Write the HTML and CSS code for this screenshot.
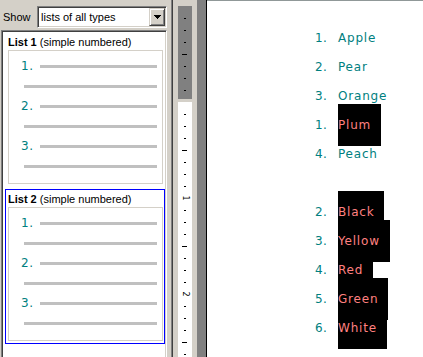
FILE: index.html
```html
<!DOCTYPE html>
<html>
<head>
<meta charset="utf-8">
<title>Lists</title>
<link rel="stylesheet" href="styles.css">
</head>
<body>
<div class="app">
  <div class="left">
    <div class="topbar">
      <span class="show-label">Show</span>
      <div class="combo">
        <span class="combo-text">lists of all types</span>
        <span class="combo-btn"><svg class="tri" width="7" height="4" viewBox="0 0 7 4"><polygon points="0,0 7,0 3.5,4" fill="#000"/></svg></span>
      </div>
    </div>
    <div class="listbox">
      <div class="item">
        <div class="item-title"><b>List 1</b> (simple numbered)</div>
        <div class="preview">
          <div class="prow"><span class="pnum">1.</span><span class="pline"></span></div>
          <div class="prow cont"><span class="pline"></span></div>
          <div class="prow"><span class="pnum">2.</span><span class="pline"></span></div>
          <div class="prow cont"><span class="pline"></span></div>
          <div class="prow"><span class="pnum">3.</span><span class="pline"></span></div>
          <div class="prow cont"><span class="pline"></span></div>
        </div>
      </div>
      <div class="item selected">
        <div class="item-title"><b>List 2</b> (simple numbered)</div>
        <div class="preview">
          <div class="prow"><span class="pnum">1.</span><span class="pline"></span></div>
          <div class="prow cont"><span class="pline"></span></div>
          <div class="prow"><span class="pnum">2.</span><span class="pline"></span></div>
          <div class="prow cont"><span class="pline"></span></div>
          <div class="prow"><span class="pnum">3.</span><span class="pline"></span></div>
          <div class="prow cont"><span class="pline"></span></div>
        </div>
      </div>
    </div>
  </div>
  <div class="divider"></div>
  <div class="gap"></div>
  <div class="ruler">
    <div class="cell"><i class="t"></i></div>
    <div class="cell"><i class="t"></i></div>
    <div class="cell"><i class="t"></i></div>
    <div class="cell"><i class="t long"></i></div>
    <div class="cell"><i class="t"></i></div>
    <div class="cell"><i class="t"></i></div>
    <div class="cell"><i class="t"></i></div>
    <div class="cell"></div>
    <div class="cell"><i class="t"></i></div>
    <div class="cell"><i class="t"></i></div>
    <div class="cell"><i class="t"></i></div>
    <div class="cell"><i class="t long"></i></div>
    <div class="cell"><i class="t"></i></div>
    <div class="cell"><i class="t"></i></div>
    <div class="cell"><i class="t"></i></div>
    <div class="cell label"><span>1</span></div>
    <div class="cell"><i class="t"></i></div>
    <div class="cell"><i class="t"></i></div>
    <div class="cell"><i class="t"></i></div>
    <div class="cell"><i class="t long"></i></div>
    <div class="cell"><i class="t"></i></div>
    <div class="cell"><i class="t"></i></div>
    <div class="cell"><i class="t"></i></div>
    <div class="cell label"><span>2</span></div>
    <div class="cell"><i class="t"></i></div>
    <div class="cell"><i class="t"></i></div>
    <div class="cell"><i class="t"></i></div>
    <div class="cell"><i class="t long"></i></div>
    <div class="cell"><i class="t"></i></div>
  </div>
  <div class="gap"></div>
  <div class="shadow"></div>
  <div class="page">
    <div class="row"><span class="num">1.</span><span>Apple</span></div>
    <div class="row"><span class="num">2.</span><span>Pear</span></div>
    <div class="row"><span class="num">3.</span><span>Orange</span></div>
    <div class="row"><span class="num">1.</span><span class="hl">Plum</span></div>
    <div class="row"><span class="num">4.</span><span>Peach</span></div>
    <div class="row"></div>
    <div class="row"><span class="num">2.</span><span class="hl">Black</span></div>
    <div class="row"><span class="num">3.</span><span class="hl">Yellow</span></div>
    <div class="row"><span class="num">4.</span><span class="hl">Red</span></div>
    <div class="row"><span class="num">5.</span><span class="hl">Green</span></div>
    <div class="row"><span class="num">6.</span><span class="hl">White</span></div>
  </div>
</div>
</body>
</html>
```
FILE: styles.css
```css
* { box-sizing: border-box; }
html, body { margin: 0; padding: 0; }
body {
  width: 423px;
  height: 357px;
  overflow: hidden;
  background: #d4d0c8;
  font-family: "Liberation Sans", Arial, sans-serif;
  font-size: 11px;
  color: #000;
}
.app { display: flex; height: 357px; }

.left {
  width: 171px;
  flex: none;
  display: flex;
  flex-direction: column;
}
.topbar {
  height: 30px;
  flex: none;
  display: flex;
  align-items: flex-start;
  padding-top: 6px;
}
.show-label {
  width: 37px;
  padding-left: 3px;
  line-height: 22px;
}
.combo {
  width: 130px;
  height: 22px;
  display: flex;
  align-items: stretch;
  background: #fff;
  border: 1px solid;
  border-color: #808080 #fff #fff #808080;
  box-shadow: inset 1px 1px 0 #404040, inset -1px -1px 0 #d4d0c8;
  padding: 1px;
}
.combo-text {
  flex: 1;
  line-height: 18px;
  padding-left: 2px;
}
.combo-btn {
  width: 16px;
  background: #d4d0c8;
  border: 1px solid;
  border-color: #d4d0c8 #404040 #404040 #d4d0c8;
  box-shadow: inset 1px 1px 0 #fff, inset -1px -1px 0 #808080;
  display: flex;
  align-items: center;
  justify-content: center;
}
.tri { display: block; shape-rendering: crispEdges; margin-left: 1px; }

.listbox {
  flex: 1;
  width: 166px;
  margin-left: 1px;
  background: #fff;
  border: 1px solid;
  border-bottom: 0;
  border-color: #808080 #fff #fff #808080;
  box-shadow: inset 1px 1px 0 #404040, inset -1px 0 0 #d4d0c8;
  padding: 1px 0 0 3px;
  overflow: hidden;
}
.item {
  width: 160px;
  border: 1px solid #fff;
  padding: 1px 1px 2px 2px;
  margin-bottom: 2px;
}
.item.selected { border-color: #0000ff; }
.item-title {
  line-height: 16px;
  height: 16px;
  white-space: nowrap;
  padding-left: 0;
}
.preview {
  height: 134px;
  border: 1px solid #d4d0c8;
  padding: 5px 5px 7px 0;
}
.prow {
  display: flex;
  height: 20px;
}
.prow.cont { padding-left: 15px; }
.pnum {
  width: 31px;
  padding-left: 12px;
  font-family: "DejaVu Sans", sans-serif;
  font-size: 12px;
  line-height: 20px;
  letter-spacing: 0.5px;
  color: #008080;
}
.pline {
  flex: 1;
  height: 3px;
  margin-top: 9px;
  background: #c0c0c0;
}

.divider {
  width: 2px;
  flex: none;
  border-left: 1px solid #808080;
  border-right: 1px solid #404040;
}
.gap { width: 5px; flex: none; }
.ruler {
  width: 14px;
  flex: none;
  margin-top: 6px;
  padding-top: 6px;
  background: linear-gradient(to bottom, #808080 0, #808080 93px, #d4d0c8 93px, #d4d0c8 96px, #fff 96px);
}
.cell {
  height: 12px;
  padding-top: 6px;
}
.t {
  display: block;
  width: 2px;
  height: 1px;
  margin-left: 6px;
  background: #000;
}
.t.long { width: 5px; margin-left: 4px; }
.cell.label {
  padding-top: 0;
  display: flex;
  align-items: center;
  justify-content: center;
  font-family: "DejaVu Sans", sans-serif;
  font-size: 8px;
  line-height: 8px;
}
.cell.label span { display: block; transform: rotate(90deg); }

.shadow {
  width: 10px;
  flex: none;
  background: #808080;
  border-right: 1px solid #000;
}
.page {
  width: 216px;
  flex: none;
  background: #fff;
  border-top: 1px solid #909898;
  padding: 23px 0 0 108px;
  font-family: "DejaVu Sans", sans-serif;
  font-size: 12px;
  letter-spacing: 0.8px;
  color: #008080;
}
.row {
  height: 29px;
  line-height: 29px;
  white-space: nowrap;
}
.num {
  display: inline-block;
  width: 23px;
  letter-spacing: 0.3px;
}
.hl {
  background: #000;
  color: #ff8080;
  padding: 14px 10px 14px 0;
}
```
